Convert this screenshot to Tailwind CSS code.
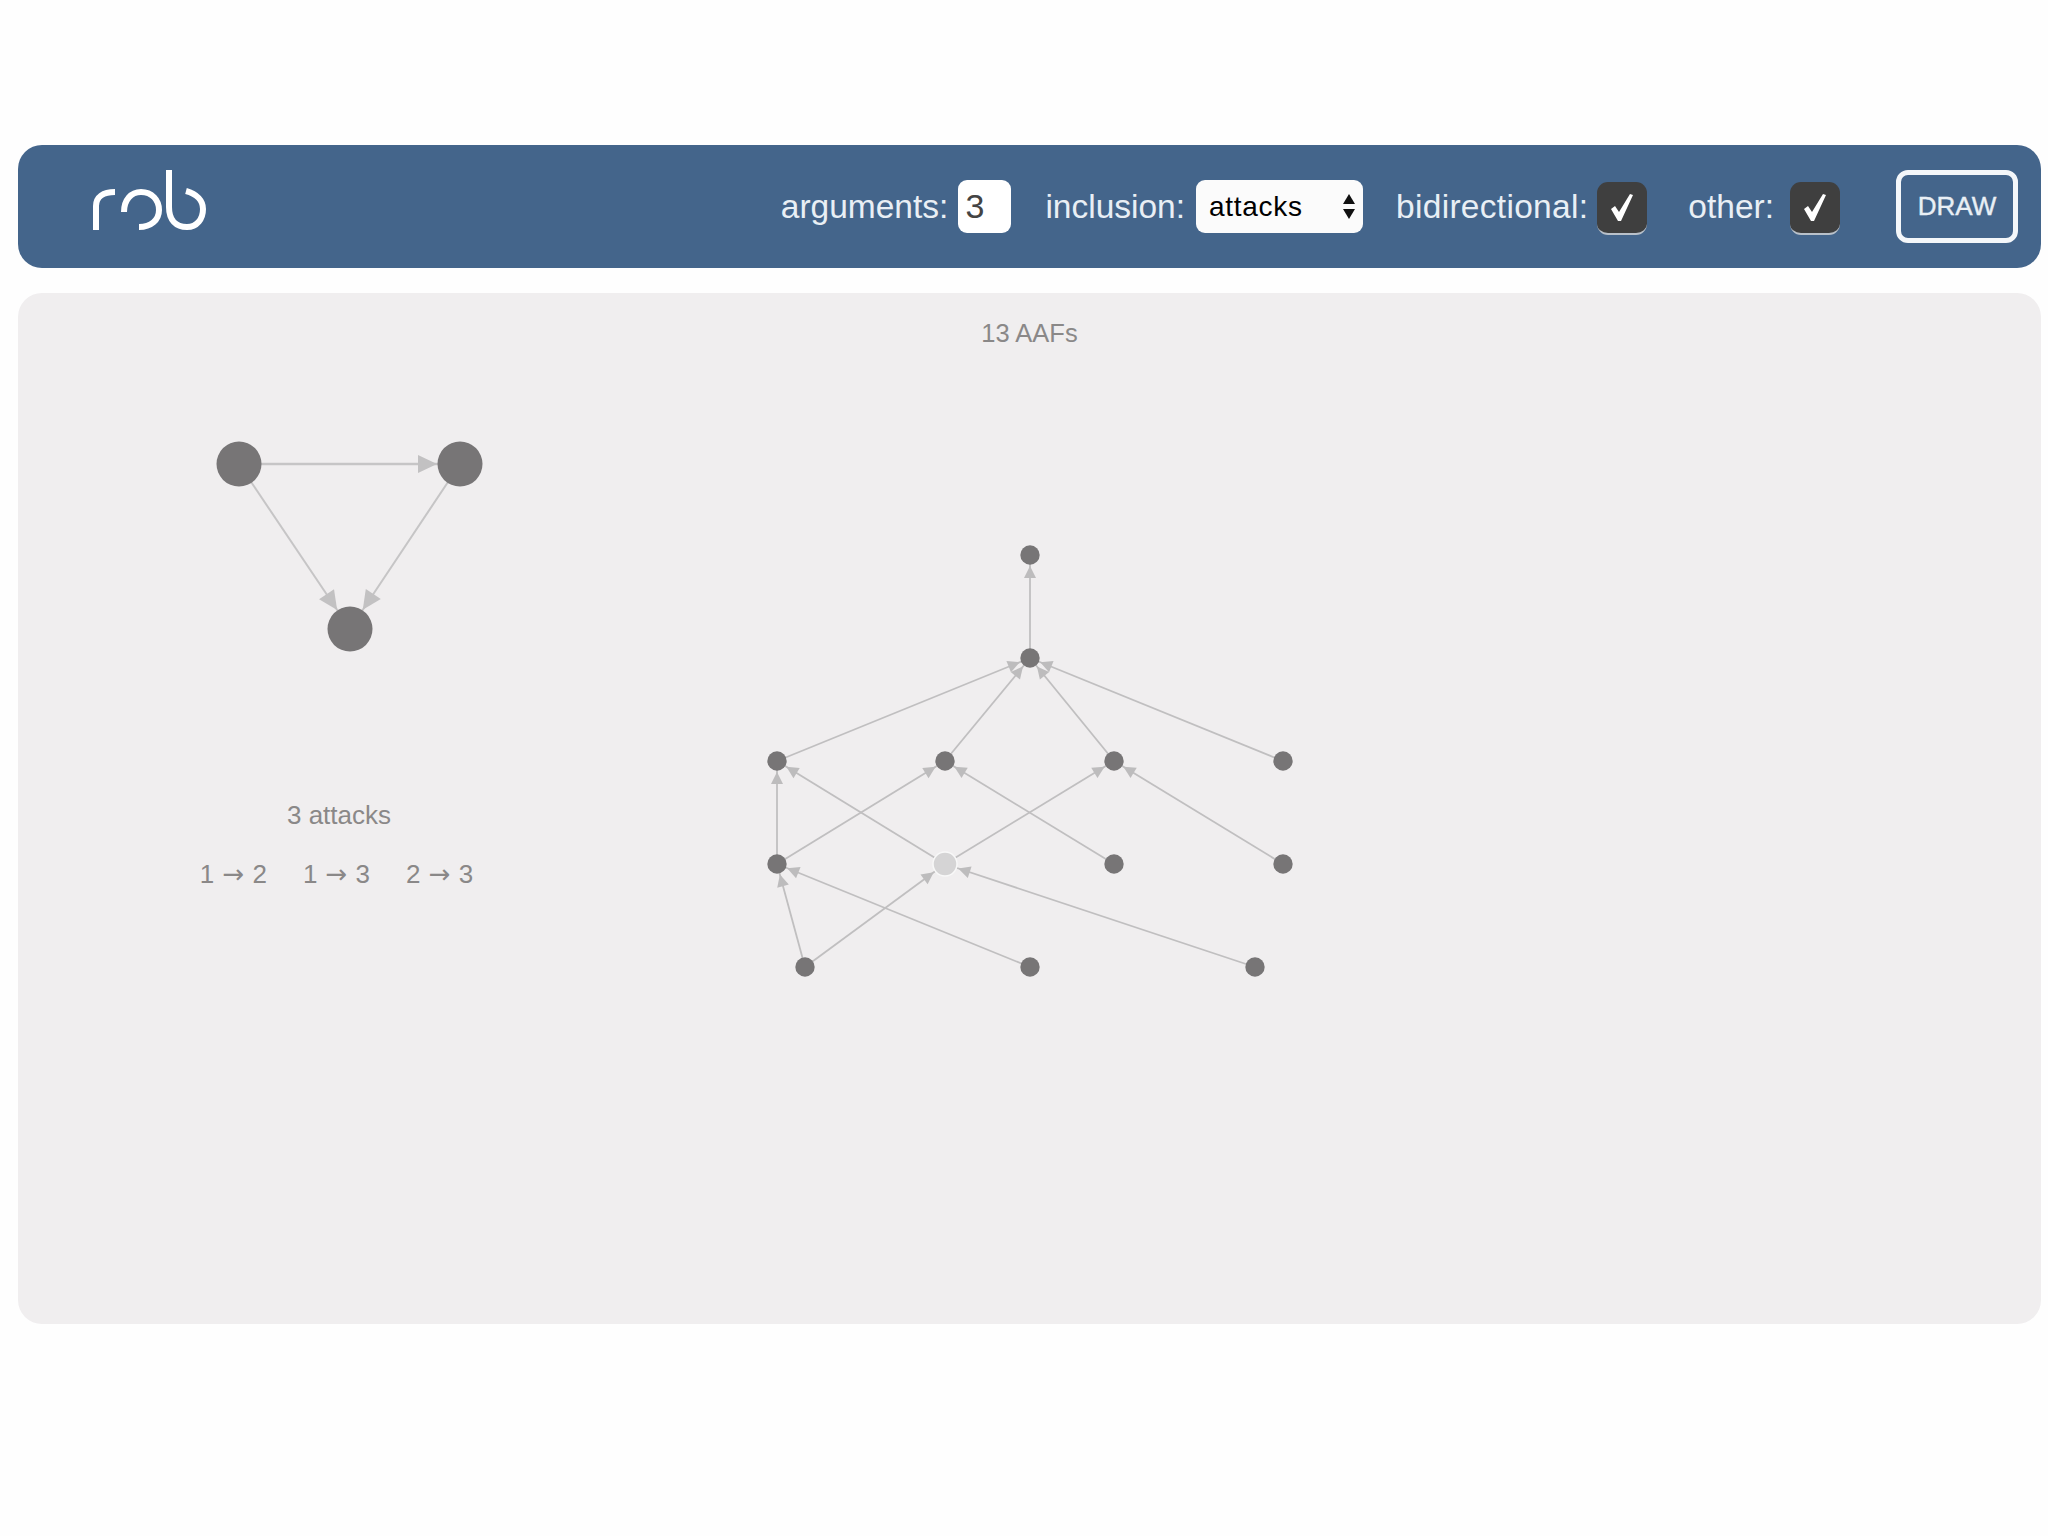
<!DOCTYPE html>
<html lang="en">
<head>
  <meta charset="UTF-8">
  <meta name="viewport" content="width=device-width, initial-scale=1.0">
  <title>AAF lattice</title>
  <script src="https://cdn.jsdelivr.net/npm/@tailwindcss/browser@4"></script>
</head>
<body class="bg-[#fefefe] min-h-screen pl-[18px] pr-[7px] pt-[145px] font-['Liberation_Sans',sans-serif]">
  <!-- top bar -->
  <header class="flex items-center h-[123px] rounded-[24px] bg-[#44658b] pl-[72px] pr-[23px] text-[#e9eff5]">
    <svg class="mb-[12px] w-[120px] h-[70px]" viewBox="90 165 120 70" fill="none" stroke="#fff" stroke-width="6">
      <path d="M96 229 V205 C96 196 103 191 115 191" />
      <path d="M124 211 C124 199 131 191 141 191 C152 191 159 199 159 209 C159 219 151 226 139 226" />
      <path d="M169 169 V206 C169 219 176 226 187 226 C197 226 203 218 203 208 C203 200 197 193 186 190" />
    </svg>

    <div class="ml-auto flex items-center text-[33.5px]">
      <label for="args" class="pt-[2px]">arguments:</label>
      <input id="args" type="text" value="3" class="ml-[10px] w-[53px] h-[53px] rounded-[9px] bg-white pl-[7px] text-[#444] text-[34px] outline-none">

      <label for="incl" class="ml-[34px] pt-[2px]">inclusion:</label>
      <div class="relative ml-[11px]">
        <select id="incl" class="block w-[167px] h-[53px] appearance-none rounded-[9px] bg-[#fbfbfb] pl-[13px] text-black text-[28px] tracking-[0.7px] outline-none">
          <option>attacks</option>
        </select>
        <svg class="absolute right-[7px] top-[14px] w-[14px] h-[25px]" viewBox="0 0 14 25" fill="#111">
          <path d="M7 0 L13 10 H1 Z" />
          <path d="M1 15 H13 L7 25 Z" />
        </svg>
      </div>

      <span class="ml-[33px] pt-[2px] tracking-[0.3px]">bidirectional:</span>
      <div class="ml-[9px] mt-[4px] flex items-center justify-center w-[50px] h-[53px] rounded-[11px] bg-[#3f3f3f] border-b-2 border-[#b9c1ca]">
        <svg class="w-[22px] h-[27px]" viewBox="0 0 22 27" fill="#fff"><path d="M0 15 L4 12 L8 18 L19 0 L22 1 L10 27 L7 27 Z" /></svg>
      </div>

      <span class="ml-[41px] pt-[2px]">other:</span>
      <div class="ml-[16px] mt-[4px] flex items-center justify-center w-[50px] h-[53px] rounded-[11px] bg-[#3f3f3f] border-b-2 border-[#b9c1ca]">
        <svg class="w-[22px] h-[27px]" viewBox="0 0 22 27" fill="#fff"><path d="M0 15 L4 12 L8 18 L19 0 L22 1 L10 27 L7 27 Z" /></svg>
      </div>
    </div>

    <button class="ml-[56px] w-[122px] h-[73px] rounded-[12px] border-[5px] border-[#f4f7fa] text-[26px] [-webkit-text-stroke:0.4px]">DRAW</button>
  </header>

  <!-- results -->
  <main class="mt-[25px] h-[1031px] rounded-[24px] bg-[#f0eeef] pt-[25px] text-[#8a8888] text-[26px] leading-[30px]">
    <p class="text-center text-[25.5px]">13 AAFs</p>

    <div class="flex items-start">
      <section class="ml-[171px] mt-[82px] w-[300px]">
        <svg class="w-[300px] h-[230px]" viewBox="189 430 300 230" fill="none">
          <defs>
            <marker id="big" markerUnits="userSpaceOnUse" markerWidth="50" markerHeight="24" refX="42" refY="12" orient="auto" overflow="visible">
              <path d="M0 3 L19 12 L0 21 Z" fill="#c2c1c2" />
            </marker>
          </defs>
          <g stroke="#c6c5c6" stroke-width="2">
            <line x1="239" y1="464" x2="460" y2="464" stroke-width="2.5" marker-end="url(#big)" />
            <line x1="239" y1="464" x2="350" y2="629" marker-end="url(#big)" />
            <line x1="460" y1="464" x2="350" y2="629" marker-end="url(#big)" />
          </g>
          <g fill="#777576">
            <circle cx="239" cy="464" r="22.5" />
            <circle cx="460" cy="464" r="22.5" />
            <circle cx="350" cy="629" r="22.5" />
          </g>
        </svg>
        <p class="mt-[140px] text-center">3 attacks</p>
        <div class="mt-[29px] pr-[5px] flex justify-center gap-[36px]">
          <span>1 <span class="mx-[1px] font-['DejaVu_Sans']">→</span> 2</span>
          <span>1 <span class="mx-[1px] font-['DejaVu_Sans']">→</span> 3</span>
          <span>2 <span class="mx-[1px] font-['DejaVu_Sans']">→</span> 3</span>
        </div>
      </section>

      <svg class="ml-[271px] mt-[192px] w-[540px] h-[445px]" viewBox="760 540 540 445" fill="none">
        <defs>
          <marker id="head" markerUnits="userSpaceOnUse" markerWidth="30" markerHeight="14" refX="23" refY="7" orient="auto" overflow="visible">
            <path d="M0 1 L12 7 L0 13 Z" fill="#bdbcbd" />
          </marker>
          <marker id="head-wide" markerUnits="userSpaceOnUse" markerWidth="30" markerHeight="14" refX="26" refY="7" orient="auto" overflow="visible">
            <path d="M0 1 L12 7 L0 13 Z" fill="#bdbcbd" />
          </marker>
        </defs>
        <g stroke="#c0bfc0" stroke-width="1.8">
          <line x1="1030" y1="658" x2="1030" y2="555" marker-end="url(#head)" />
          <line x1="777" y1="761" x2="1030" y2="658" marker-end="url(#head)" />
          <line x1="945" y1="761" x2="1030" y2="658" marker-end="url(#head)" />
          <line x1="1114" y1="761" x2="1030" y2="658" marker-end="url(#head)" />
          <line x1="1283" y1="761" x2="1030" y2="658" marker-end="url(#head)" />
          <line x1="777" y1="864" x2="777" y2="761" marker-end="url(#head)" />
          <line x1="945" y1="864" x2="777" y2="761" marker-end="url(#head)" />
          <line x1="777" y1="864" x2="945" y2="761" marker-end="url(#head)" />
          <line x1="1114" y1="864" x2="945" y2="761" marker-end="url(#head)" />
          <line x1="945" y1="864" x2="1114" y2="761" marker-end="url(#head)" />
          <line x1="1283" y1="864" x2="1114" y2="761" marker-end="url(#head)" />
          <line x1="805" y1="967" x2="777" y2="864" marker-end="url(#head)" />
          <line x1="805" y1="967" x2="945" y2="864" marker-end="url(#head-wide)" />
          <line x1="1030" y1="967" x2="777" y2="864" marker-end="url(#head)" />
          <line x1="1255" y1="967" x2="945" y2="864" marker-end="url(#head-wide)" />
        </g>
        <g fill="#777576">
          <circle cx="1030" cy="555" r="9.7" />
          <circle cx="1030" cy="658" r="9.7" />
          <circle cx="777" cy="761" r="9.7" />
          <circle cx="945" cy="761" r="9.7" />
          <circle cx="1114" cy="761" r="9.7" />
          <circle cx="1283" cy="761" r="9.7" />
          <circle cx="777" cy="864" r="9.7" />
          <circle cx="1114" cy="864" r="9.7" />
          <circle cx="1283" cy="864" r="9.7" />
          <circle cx="805" cy="967" r="9.7" />
          <circle cx="1030" cy="967" r="9.7" />
          <circle cx="1255" cy="967" r="9.7" />
        </g>
        <circle cx="945" cy="864" r="12" fill="#d5d4d5" stroke="#f8f8f8" stroke-width="1.5" />
      </svg>
    </div>
  </main>
</body>
</html>
